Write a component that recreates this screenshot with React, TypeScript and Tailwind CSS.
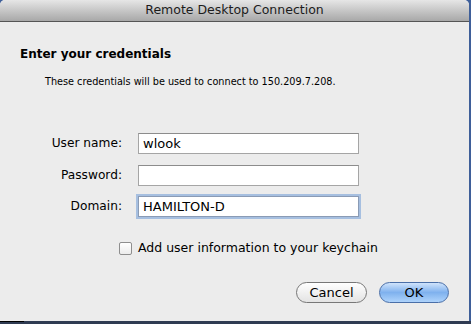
const Field = ({ label, value, focused }: { label: string; value: string; focused?: boolean }) => (
  <div className="flex items-center h-[21px]">
    <div className="w-[122px] text-right text-[12.2px] text-black">{label}</div>
    <div
      className={
        focused
          ? "ml-[16px] w-[221px] h-[21px] bg-white border border-[#8a9bb5] shadow-[0_0_0_2px_#a6bfe0] flex items-center px-[4px] text-[13px] text-black"
          : "ml-[16px] w-[221px] h-[21px] bg-white border border-[#a5a5a5] border-t-[#8c8c8c] flex items-center px-[4px] text-[13px] text-black"
      }
    >
      {value}
    </div>
  </div>
);

export default function App() {
  return (
    <div className="w-[471px] h-[324px] bg-[#3f5f99] flex flex-col font-['DejaVu_Sans',sans-serif]">
      <div className="w-[469px] h-[321px] bg-[#ececec] rounded-t-[5px] overflow-hidden flex flex-col">
        {/* title bar */}
        <div className="h-[22px] shrink-0 border-b border-[#555] bg-linear-to-b from-[#e6e6e6] to-[#a8a8a8] flex items-center justify-center text-[12.5px] text-[#1c1c1c]">
          Remote Desktop Connection
        </div>

        <div className="pl-[20px] pt-[24px] text-[12px] font-bold text-black leading-[16px]">Enter your credentials</div>
        <div className="pl-[45px] pt-[13px] text-[9.7px] text-black leading-[14px]">
          These credentials will be used to connect to 150.209.7.208.
        </div>

        <div className="mt-[44px] flex flex-col gap-[10.5px]">
          <Field label="User name:" value="wlook" />
          <Field label="Password:" value="" />
          <Field label="Domain:" value="HAMILTON-D" focused />
        </div>

        <div className="mt-[22px] pl-[119px] flex items-center gap-[6px]">
          <div className="w-[13px] h-[13px] rounded-[2px] border border-[#8e8e8e] bg-linear-to-b from-white to-[#ececec]" />
          <span className="text-[12.5px] text-black">Add user information to your keychain</span>
        </div>

        <div className="mt-[24px] pr-[20px] flex justify-end gap-[12px]">
          <div className="w-[71px] h-[21px] rounded-full border border-[#777] bg-linear-to-b from-white to-[#e3e3e3] flex items-center justify-center text-[13px] text-black">
            Cancel
          </div>
          <div className="w-[70px] h-[21px] rounded-full border border-[#4a6fa8] bg-linear-to-b from-[#cfe3fb] via-[#7fb1ee] to-[#aed3fb] flex items-center justify-center text-[13px] text-black">
            OK
          </div>
        </div>
      </div>
      <div className="flex-1 bg-[#2f3b52] relative">
        <div className="absolute left-0 top-0 w-[24px] h-[1px] bg-black" />
      </div>
    </div>
  );
}
